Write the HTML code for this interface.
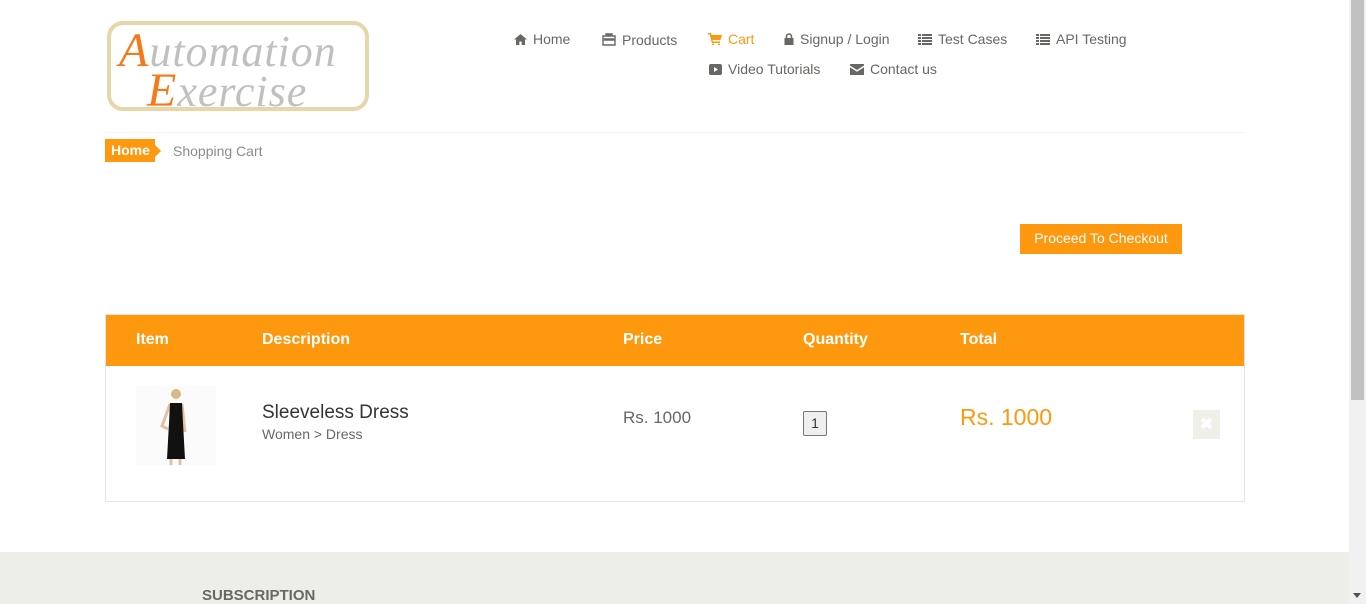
<!DOCTYPE html>
<html><head><meta charset="utf-8"><style>
*{margin:0;padding:0;box-sizing:border-box}
body{width:1366px;height:604px;overflow:hidden;background:#fff;font-family:"Liberation Sans",Arial,sans-serif;position:relative;color:#696763}
.a{position:absolute}
.logo{left:107px;top:21px;width:262px;height:90px;border:4px solid #e8d5a8;border-radius:16px;background:#fff}
.logo span{position:absolute;font-family:"Liberation Serif",serif;font-style:italic;font-size:44px;color:#c0c0c0;letter-spacing:1px}
.logo b{color:#f57a1a;font-weight:normal;font-size:48px}
.nav{font-size:14px;color:#696763}
.nav svg{vertical-align:-1px;margin-right:6px}
.hr{left:105px;top:132px;width:1140px;height:1px;background:#f3f3f3}
.bc{left:105px;top:139px;height:23px;width:50px;background:#fe980f;color:#fff;font-size:14px;font-weight:bold;line-height:23px;padding-left:6px}
.bc:after{content:"";position:absolute;right:-6px;top:6px;border-left:6px solid #fe980f;border-top:6px solid transparent;border-bottom:6px solid transparent}
.btn{left:1020px;top:224px;width:162px;height:30px;background:#fe980f;color:#fff;font-size:14px;line-height:29px;text-align:center}
.tbl{left:105px;top:314px;width:1140px;height:188px;border:1px solid #e6e4df}
.th{left:106px;top:315px;width:1138px;height:51px;background:#fe980f}
.th span{position:absolute;top:16px;color:#fff;font-size:16px;font-weight:bold}
.foot{left:0;top:552px;width:1349px;height:52px;background:#eeeee8}
.sb{left:1349px;top:0;width:17px;height:604px;background:#f1f1f1}
</style></head><body>
<div class="a logo"><span style="left:8px;top:-2px"><b>A</b>utomation</span><span style="left:36px;top:38px"><b>E</b>xercise</span></div>
<div class="a nav" style="left:514px;top:31px"><svg width="13" height="11" viewBox="0 0 13 11"><path d="M6.5 0L0 5.5h2V11h3.3V7.5h2.4V11H11V5.5h2z" fill="#696763"/></svg>Home</div>
<div class="a nav" style="left:602px;top:32px"><svg width="14" height="13" viewBox="0 0 14 13"><path d="M4 3V1h6v2h3v9H1V3zm1.5 0h3V2h-3zM2.5 6h9v1h-9z" fill="none" stroke="#696763" stroke-width="1.4"/></svg>Products</div>
<div class="a nav" style="left:708px;top:31px;color:#fe980f"><svg width="14" height="12" viewBox="0 0 14 12"><path d="M0 0h3l.6 2H14l-1.5 5H4.5l.4 1.5H12V10H3.8L1.8 1.5H0z M5 10.5a1 1 0 1 0 .01 0M11 10.5a1 1 0 1 0 .01 0" fill="#fe980f"/></svg>Cart</div>
<div class="a nav" style="left:784px;top:31px"><svg width="10" height="12" viewBox="0 0 10 12"><path d="M2.5 5V3.5a2.5 2.5 0 0 1 5 0V5" fill="none" stroke="#696763" stroke-width="1.6"/><rect x="0.5" y="5" width="9" height="7" fill="#696763"/></svg>Signup / Login</div>
<div class="a nav" style="left:918px;top:31px"><svg width="14" height="11" viewBox="0 0 14 11"><path d="M0 0h3v2H0zm4 0h10v2H4zM0 3h3v2H0zm4 0h10v2H4zM0 6h3v2H0zm4 0h10v2H4zM0 9h3v2H0zm4 0h10v2H4z" fill="#696763"/></svg>Test Cases</div>
<div class="a nav" style="left:1036px;top:31px"><svg width="14" height="11" viewBox="0 0 14 11"><path d="M0 0h3v2H0zm4 0h10v2H4zM0 3h3v2H0zm4 0h10v2H4zM0 6h3v2H0zm4 0h10v2H4zM0 9h3v2H0zm4 0h10v2H4z" fill="#696763"/></svg>API Testing</div>
<div class="a nav" style="left:709px;top:61px"><svg width="13" height="11" viewBox="0 0 13 11"><rect width="13" height="11" rx="2" fill="#696763"/><path d="M5 3v5l4-2.5z" fill="#fff"/></svg>Video Tutorials</div>
<div class="a nav" style="left:850px;top:61px"><svg width="14" height="11" viewBox="0 0 14 11"><path d="M0 0h14v1.5L7 6 0 1.5zM0 3.2l7 4.5 7-4.5V11H0z" fill="#696763"/></svg>Contact us</div>
<div class="a hr"></div>
<div class="a bc">Home</div>
<div class="a" style="left:173px;top:143px;font-size:14px;color:#8c8c88">Shopping Cart</div>
<div class="a btn">Proceed To Checkout</div>
<div class="a tbl"></div>
<div class="a th"><span style="left:30px">Item</span><span style="left:156px">Description</span><span style="left:517px">Price</span><span style="left:697px">Quantity</span><span style="left:854px">Total</span></div>
<div class="a" style="left:136px;top:386px;width:80px;height:80px;background:#fbfbfb">
<svg width="80" height="80" viewBox="0 0 80 80"><circle cx="40" cy="8" r="5" fill="#d9b98a"/><path d="M34 18l-8 22 6 3M46 18l3 28" stroke="#e6c0a0" stroke-width="3" fill="none"/><path d="M34 17h12l1 20 2 36H31l2-36z" fill="#111"/><path d="M35 73l0 6M44 73l0 6" stroke="#e6c0a0" stroke-width="3"/></svg></div>
<div class="a" style="left:262px;top:402px;font-size:19px;color:#363432">Sleeveless Dress</div>
<div class="a" style="left:262px;top:426px;font-size:14px;color:#696763">Women &gt; Dress</div>
<div class="a" style="left:623px;top:408px;font-size:17px;color:#696763">Rs. 1000</div>
<div class="a" style="left:803px;top:411px;width:24px;height:25px;background:#efefef;border:1px solid #777;border-radius:2px;font-size:14px;text-align:center;line-height:23px;color:#333">1</div>
<div class="a" style="left:960px;top:404px;font-size:23px;color:#fe980f">Rs. 1000</div>
<div class="a" style="left:1193px;top:410px;width:27px;height:29px;background:#f0f0e9;color:#fff;font-size:16px;font-weight:bold;text-align:center;line-height:29px">✖</div>
<div class="a foot"></div>
<div class="a" style="left:202px;top:587px;font-size:15px;font-weight:bold;color:#696763">SUBSCRIPTION</div>
<div class="a sb"><div style="position:absolute;left:2px;top:0;width:13px;height:400px;background:#c1c1c1"></div><div style="position:absolute;left:4px;top:593px;border-top:5px solid #505050;border-left:4px solid transparent;border-right:4px solid transparent"></div></div>
</body></html>
